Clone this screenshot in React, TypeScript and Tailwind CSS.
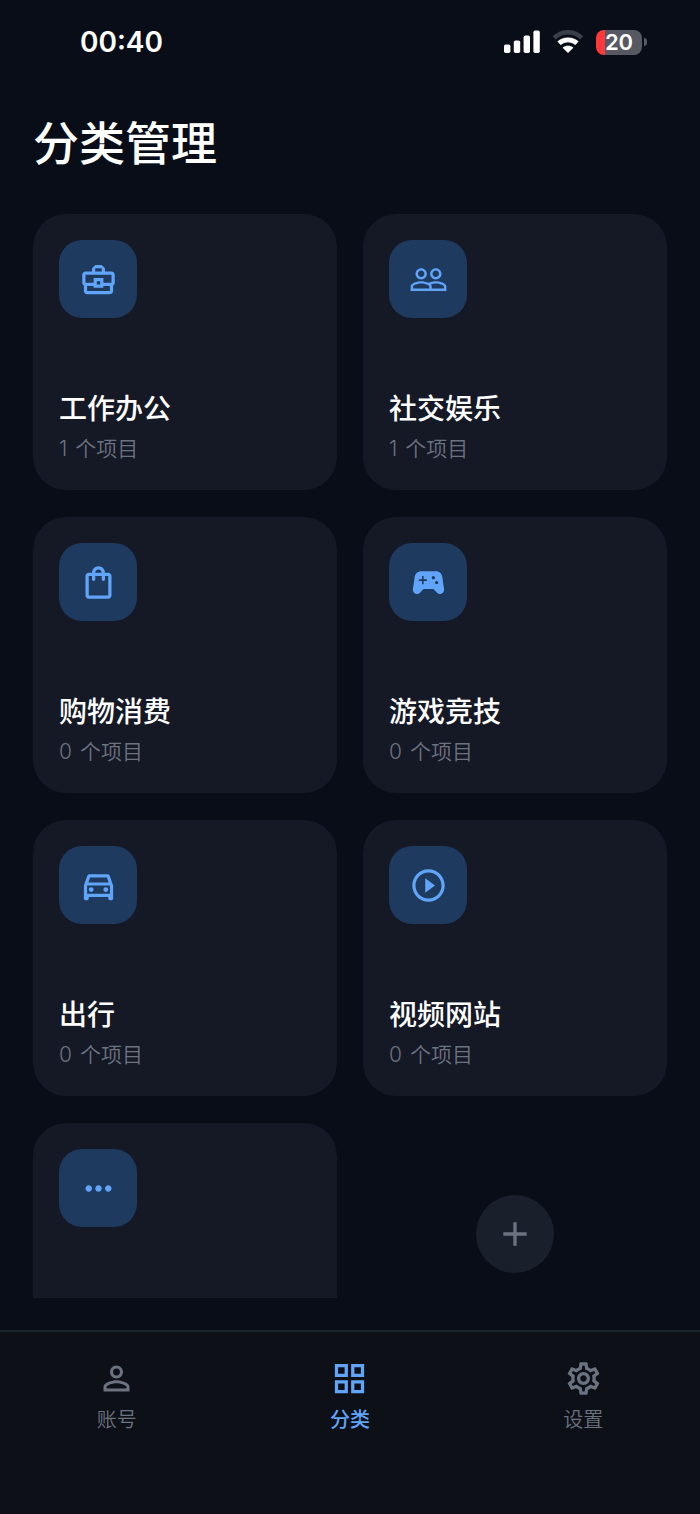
import type { IconType } from "react-icons";
import {
  MdAdd,
  MdGridView,
  MdMoreHoriz,
  MdOutlineBusinessCenter,
  MdOutlineDirectionsCar,
  MdOutlineSettings,
  MdOutlineShoppingBag,
  MdPeopleOutline,
  MdPersonOutline,
  MdPlayCircleOutline,
  MdSportsEsports,
} from "react-icons/md";

type Category = { name?: string; count?: number; icon: IconType };

const categories: Category[] = [
  { name: "工作办公", count: 1, icon: MdOutlineBusinessCenter },
  { name: "社交娱乐", count: 1, icon: MdPeopleOutline },
  { name: "购物消费", count: 0, icon: MdOutlineShoppingBag },
  { name: "游戏竞技", count: 0, icon: MdSportsEsports },
  { name: "出行", count: 0, icon: MdOutlineDirectionsCar },
  { name: "视频网站", count: 0, icon: MdPlayCircleOutline },
  { icon: MdMoreHoriz },
];

const tabs = [
  { label: "账号", icon: MdPersonOutline, active: false },
  { label: "分类", icon: MdGridView, active: true },
  { label: "设置", icon: MdOutlineSettings, active: false },
];

function StatusBar() {
  return (
    <header className="flex h-[84px] shrink-0 items-center justify-between pr-[53px] pl-20">
      <time className="text-[28px] leading-8 font-semibold">00:40</time>
      <div className="flex items-center gap-3">
        <svg className="h-6 w-9" viewBox="0 0 36 24" fill="#fff" aria-label="信号">
          <rect x="0" y="14.5" width="6.4" height="8.5" rx="1.8" />
          <rect x="9.8" y="10.5" width="6.4" height="12.5" rx="1.8" />
          <rect x="19.6" y="5.5" width="6.4" height="17.5" rx="1.8" />
          <rect x="29.4" y="0.5" width="6.4" height="22.5" rx="1.8" />
        </svg>
        <svg className="h-6 w-8" viewBox="0 0 32 24" fill="none" aria-label="无线网络">
          <path d="M2.2 7.8C10 .3 22 .3 29.8 7.8" stroke="#3b3e49" strokeWidth="4.4" />
          <path d="M7 13.3c5-4.7 13-4.7 18 0" stroke="#fff" strokeWidth="4.8" />
          <path d="M16 23l-5.4-5.2c3-2.6 7.8-2.6 10.8 0z" fill="#fff" />
        </svg>
        <div className="flex items-center gap-[2px]">
          <div className="flex h-[25px] w-[46px] items-center justify-center rounded-lg bg-linear-to-r from-[#ff383c] from-20% to-[#575962] to-20% text-[22px] leading-6 font-semibold">
            20
          </div>
          <div className="h-2 w-[3px] rounded-r-full bg-[#575962]" />
        </div>
      </div>
    </header>
  );
}

function CategoryCard({ name, count, icon: Icon }: Category) {
  return (
    <button
      type="button"
      aria-label={name ?? "更多"}
      className="flex h-[276px] flex-col items-start justify-between rounded-[33px] bg-[#151825] px-[26px] pt-[26px] pb-[25px] text-left"
    >
      <span className="flex size-[78px] items-center justify-center rounded-[23px] bg-[#1e3a5f] text-[#60a5fa]">
        <Icon className="size-[39px]" />
      </span>
      {name && (
        <span className="flex flex-col gap-1">
          <span className="text-[28px] leading-10 font-medium">{name}</span>
          <span className="flex gap-2 text-[21px] leading-8 font-[350] text-[#6b7280]">
            <span>{count}</span>
            <span>个项目</span>
          </span>
        </span>
      )}
    </button>
  );
}

export default function App() {
  return (
    <div className="flex h-screen flex-col bg-[#090d18] font-['Inter','Noto_Sans_CJK_SC',sans-serif] text-white">
      <StatusBar />
      <main className="mb-8 flex min-h-0 flex-1 flex-col overflow-hidden px-[33px]">
        <h1 className="mt-6 mb-9 shrink-0 text-[46px] leading-[70px] font-medium">分类管理</h1>
        <div className="grid grid-cols-2 gap-x-[26px] gap-y-[27px]">
          {categories.map((category, index) => (
            <CategoryCard key={index} {...category} />
          ))}
          <div className="flex items-start justify-center pt-[72px]">
            <button
              type="button"
              aria-label="添加分类"
              className="flex size-[78px] items-center justify-center rounded-full bg-[#1a1f2c] text-[#6b7280]"
            >
              <MdAdd className="size-10" />
            </button>
          </div>
        </div>
      </main>
      <nav className="grid h-[184px] shrink-0 grid-cols-3 items-start border-t-2 border-[#1b2431] bg-[#0d1017] pt-[27px]">
        {tabs.map(({ label, icon: Icon, active }) => (
          <a
            key={label}
            href="#"
            aria-current={active ? "page" : undefined}
            className={
              active
                ? "flex flex-col items-center gap-[6px] font-medium text-[#60a5fa]"
                : "flex flex-col items-center gap-[6px] font-[350] text-[#6b7280]"
            }
          >
            <Icon className="size-[39px]" />
            <span className="text-[20px] leading-8">{label}</span>
          </a>
        ))}
      </nav>
    </div>
  );
}
